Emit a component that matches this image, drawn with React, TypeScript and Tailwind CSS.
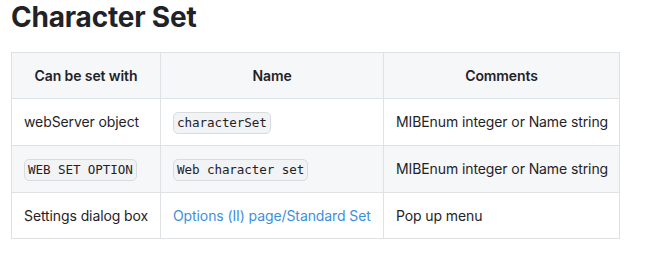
export default function App() {
  const code =
    "inline-block rounded-[5px] border border-[#d9dcdf] bg-[#f2f3f4] px-[3px] leading-[20px] text-[12.6px] text-[#1f2328] [font-family:'DejaVu_Sans_Mono',monospace]";
  const cell = "border border-[#dfe2e5] px-3 align-middle whitespace-nowrap overflow-hidden";
  return (
    <div className="w-[650px] h-[257px] bg-white text-[#1f2328] [font-family:Inter,'Liberation_Sans',sans-serif]">
      <h1 className="pl-[11px] pt-0 text-[28px] font-bold leading-[34px] tracking-[-0.2px]">Character Set</h1>
      <table className="ml-[11px] mt-[18px] w-[608px] table-fixed border-collapse text-[14px] leading-[22px] tracking-[-0.1px]">
        <colgroup>
          <col className="w-[149px]" />
          <col className="w-[223px]" />
          <col className="w-[236px]" />
        </colgroup>
        <thead>
          <tr className="h-[46px] bg-[#f6f7f8]">
            <th className={`${cell} text-center font-semibold`}>Can be set with</th>
            <th className={`${cell} text-center font-semibold`}>Name</th>
            <th className={`${cell} text-center font-semibold`}>Comments</th>
          </tr>
        </thead>
        <tbody>
          <tr className="h-[47px] bg-white">
            <td className={cell}>webServer object</td>
            <td className={cell}>
              <span className={code}>characterSet</span>
            </td>
            <td className={cell}>MIBEnum integer or Name string</td>
          </tr>
          <tr className="h-[47px] bg-[#f6f7f8]">
            <td className={cell}>
              <span className={code}>WEB SET OPTION</span>
            </td>
            <td className={cell}>
              <span className={code}>Web character set</span>
            </td>
            <td className={cell}>MIBEnum integer or Name string</td>
          </tr>
          <tr className="h-[46px] bg-white">
            <td className={cell}>Settings dialog box</td>
            <td className={cell}>
              <a className="text-[#3d8fdc]">Options (II) page/Standard Set</a>
            </td>
            <td className={cell}>Pop up menu</td>
          </tr>
        </tbody>
      </table>
    </div>
  );
}
